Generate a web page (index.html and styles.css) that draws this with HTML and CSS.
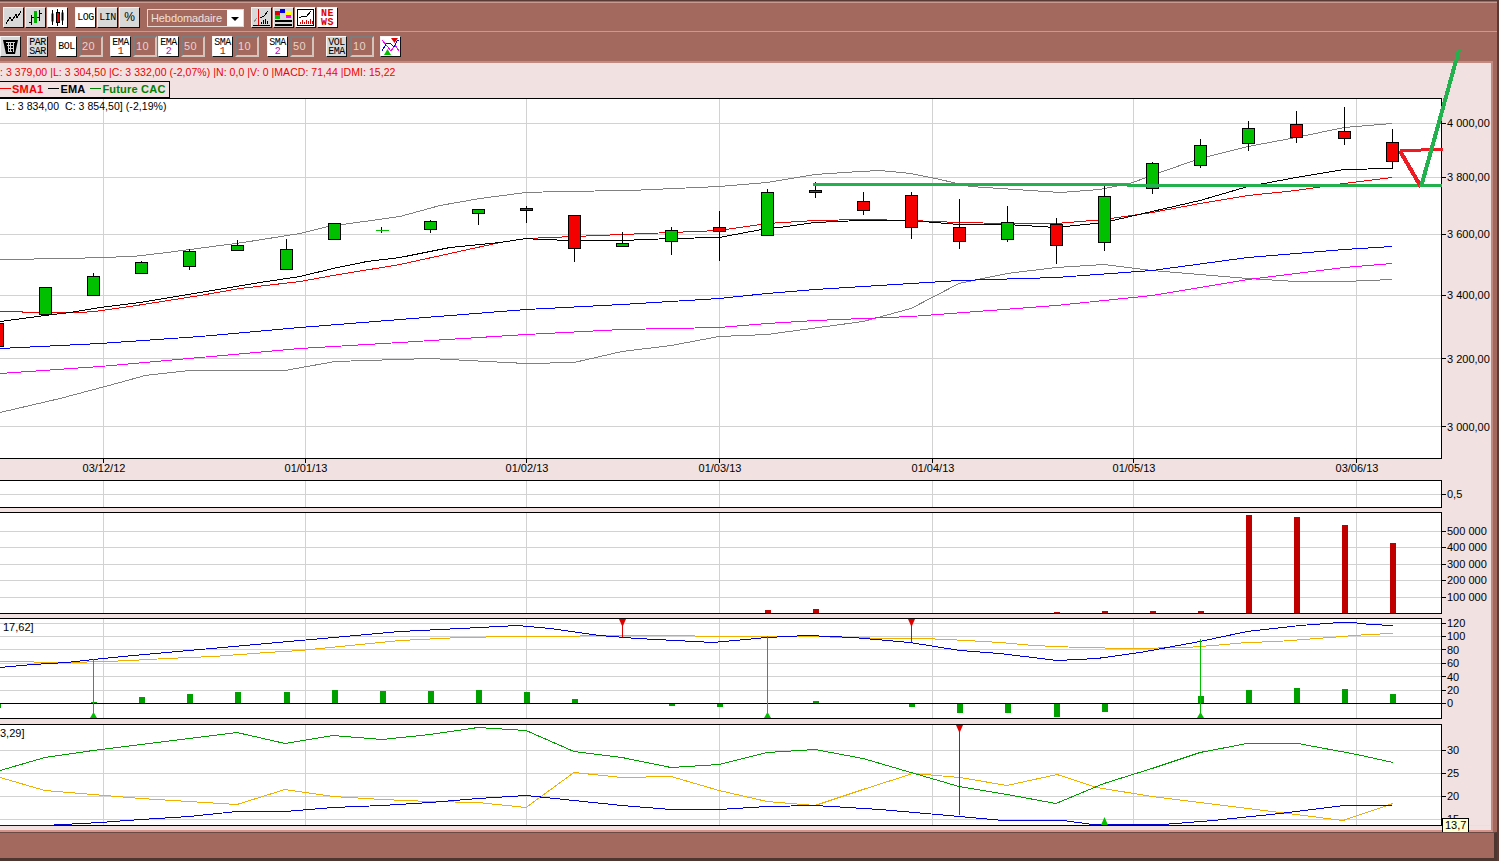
FILE: index.html
```html
<!DOCTYPE html>
<html>

<head>
    <title>Graphique - Hebdomadaire</title>
    <link rel="stylesheet" href="styles.css">
</head>

<body>
    <div class="toolbars">
        <div class="toolbar toolbar-top">
            <div class="group">
                <div class="btn">
                    <svg width="19" height="19" viewBox="0 0 19 19"><path class="ic" d="M2 16L6 9L8 13L12 6L13 10L17 3"/></svg>
                </div>
                <div class="btn">
                    <svg width="19" height="19" viewBox="0 0 19 19"><path class="ic" d="M5.500 7V17M3 14H5.500M5.500 9H8M13.500 2V13M11 9H13.500M13.500 5H16"/><path class="ic-green" d="M9.500 3V15"/></svg>
                </div>
                <div class="btn btn-white">
                    <svg width="19" height="19" viewBox="0 0 19 19"><path class="ic" d="M4.500 2V17M14.500 2V17"/><rect class="ic-candle" x="3.500" y="5.500" width="2" height="8"/><rect class="ic-candle" x="13.500" y="4.500" width="2" height="8"/><path class="ic" d="M9.500 1V18"/><rect class="ic-red" x="8" y="4" width="3" height="10"/></svg>
                </div>
            </div>
            <div class="group">
                <div class="btn btn-white">LOG</div>
                <div class="btn">LIN</div>
                <div class="btn btn-pct">%</div>
            </div>
            <div class="select">
                <span class="select-value">Hebdomadaire</span>
                <span class="select-arrow"></span>
            </div>
            <div class="group">
                <div class="btn">
                    <svg width="19" height="19" viewBox="0 0 19 19"><path class="ic-gray" d="M2 14L5 10"/><path class="ic-redline" d="M6.500 1V18"/><path class="ic" d="M8 10L12 8L16 3M9 16V14M11 16V12M13 16V11M15 16V13M1 17.500H18"/></svg>
                </div>
                <div class="btn">
                    <svg width="19" height="19" viewBox="0 0 19 19"><rect x="1" y="3" width="5" height="4" fill="#e00000"/><rect x="6" y="1" width="5" height="4" fill="#0000e0"/><rect x="12" y="3" width="5" height="4" fill="#ffff00"/><rect x="1" y="7" width="5" height="4" fill="#00c000"/><rect x="12" y="7" width="5" height="3" fill="#ff00ff"/><path class="ic-thick" d="M1 12.500H18M1 16.500H18"/></svg>
                </div>
                <div class="btn btn-white">
                    <svg width="19" height="19" viewBox="0 0 19 19"><rect class="ic" x="1.500" y="1.500" width="16" height="16"/><path class="ic" d="M3 10L7 8L10 9L15 3"/><path class="ic-redline" d="M4 16V14M6 16V12M8 16V14M10 16V12M12 16V13M14 16V11M16 16V13"/></svg>
                </div>
                <div class="btn btn-white btn-two btn-news">NE<br>WS</div>
            </div>
        </div>
        <div class="toolbar toolbar-bottom">
            <div class="group group-tools">
                <div class="btn">
                    <svg width="19" height="19" viewBox="0 0 19 19"><path class="ic-fill" d="M2 3H17L14 17H5Z"/><path class="ic-white" d="M5 5.500H14M6 8.500H13M7 11.500H12M8 14.500H11M7 5V15M9.500 5V15M12 5V15"/></svg>
                </div>
                <div class="btn btn-two">PAR<br>SAR</div>
            </div>
            <div class="pair">
                <div class="btn btn-white">BOL</div>
                <div class="input">20</div>
            </div>
            <div class="group group-ema">
                <div class="pair pair-tight">
                    <div class="btn btn-white btn-two">EMA<br><span class="num-red">1</span></div>
                    <div class="input">10</div>
                </div>
                <div class="pair">
                    <div class="btn btn-white btn-two">EMA<br><span class="num-magenta">2</span></div>
                    <div class="input">50</div>
                </div>
            </div>
            <div class="pair">
                <div class="btn btn-white btn-two">SMA<br><span class="num-red">1</span></div>
                <div class="input">10</div>
            </div>
            <div class="pair pair-sma2">
                <div class="btn btn-white btn-two">SMA<br><span class="num-magenta">2</span></div>
                <div class="input">50</div>
            </div>
            <div class="pair pair-vol">
                <div class="btn btn-two">VOL<br>EMA</div>
                <div class="input">10</div>
            </div>
            <div class="btn btn-white btn-signals">
                <svg width="19" height="19" viewBox="0 0 19 19"><path class="ic-magenta" d="M1 3L6 9L10 14L14 8L18 14"/><path class="ic-blue" d="M1 14L5 7L9 6L13 10L16 4L18 3"/><path class="ic-redfill" d="M10 1H17L13.500 6Z"/><path class="ic-greenfill" d="M3 18L6.500 12L10 18Z"/></svg>
            </div>
        </div>
    </div>

    <div class="workspace">
        <div class="info">: 3 379,00 |L: 3 304,50 |C: 3 332,00 (-2,07%) |N: 0,0 |V: 0 |MACD: 71,44 |DMI: 15,22</div>
        <div class="legend">
            <span class="legend-item legend-red">SMA1</span>
            <span class="legend-item legend-black">EMA</span>
            <span class="legend-item legend-green">Future CAC</span>
        </div>

        <svg class="chart" width="1491" height="733" viewBox="0 98 1491 733">
            <!-- panels -->
            <rect class="panel" x="-2" y="98.500" width="1443.500" height="360"/>
            <rect class="panel" x="-2" y="480.500" width="1443.500" height="27"/>
            <rect class="panel" x="-2" y="512.500" width="1443.500" height="101"/>
            <rect class="panel" x="-2" y="618.500" width="1443.500" height="100"/>
            <rect class="panel" x="-2" y="724.500" width="1443.500" height="101"/>

            <!-- grid -->
            <path class="grid" d="M103.500 99V458M305.500 99V458M526.500 99V458M719.500 99V458M932.500 99V458M1133.500 99V458M1356.500 99V458"/>
            <path class="grid" d="M0 123.500H1441M0 177.500H1441M0 234.500H1441M0 295.500H1441M0 358.500H1441M0 426.500H1441"/>
            <path class="grid" d="M103.500 481V507M305.500 481V507M526.500 481V507M719.500 481V507M932.500 481V507M1133.500 481V507M1356.500 481V507M0 494.500H1441"/>
            <path class="grid" d="M103.500 513V613M305.500 513V613M526.500 513V613M719.500 513V613M932.500 513V613M1133.500 513V613M1356.500 513V613M0 531.500H1441M0 547.500H1441M0 564.500H1441M0 580.500H1441M0 597.500H1441"/>
            <path class="grid" d="M103.500 619V718M305.500 619V718M526.500 619V718M719.500 619V718M932.500 619V718M1133.500 619V718M1356.500 619V718M0 623.500H1441M0 636.500H1441M0 649.500H1441M0 663.500H1441M0 676.500H1441M0 690.500H1441"/>
            <path class="grid" d="M103.500 725V825M305.500 725V825M526.500 725V825M719.500 725V825M932.500 725V825M1133.500 725V825M1356.500 725V825M0 750.500H1441M0 773.500H1441M0 796.500H1441M0 819.500H1441"/>
            <path class="grid-faint" d="M1469 825.500H1490"/>

            <!-- axis ticks -->
            <path class="tick" d="M1441 123.500H1446M1441 177.500H1446M1441 234.500H1446M1441 295.500H1446M1441 358.500H1446M1441 426.500H1446M1441 494.500H1446M1441 531.500H1446M1441 547.500H1446M1441 564.500H1446M1441 580.500H1446M1441 597.500H1446M1441 623.500H1446M1441 636.500H1446M1441 649.500H1446M1441 663.500H1446M1441 676.500H1446M1441 690.500H1446M1441 703.500H1446M1441 750.500H1446M1441 773.500H1446M1441 796.500H1446M1441 819.500H1446"/>
            <path class="tick" d="M103.500 458V463M305.500 458V463M526.500 458V463M719.500 458V463M932.500 458V463M1133.500 458V463M1356.500 458V463"/>

            <!-- main chart lines -->
            <polyline class="line line-gray" points="0,259 70,258 100,257 133,256 167,252 243,242 300,233 328,226 400,216 440,205 480,198 526,192 560,191 630,190 719,186 767,182 815,174 860,171 880,170 911,173 940,179 970,186 1000,188 1060,192 1100,189 1130,183 1160,172 1200,158 1248,146 1296,137 1344,127 1392,123"/>
            <polyline class="line line-gray" points="0,412 60,398 120,382 145,375 190,370 285,370 335,361 430,358 526,363 574,362 622,351 671,345 719,336 767,334 863,321 911,308 959,283 1007,273 1056,267 1104,264 1152,270 1248,278 1296,281 1344,281 1392,279"/>
            <polyline class="line line-blue" points="0,348 100,343 200,336 300,327 400,319 526,309 622,304 719,298 767,293 815,289 911,283 959,280 1056,277 1152,270 1248,257 1344,249 1392,246"/>
            <polyline class="line line-magenta" points="0,373 100,366 200,357 300,348 400,342 526,334 622,329 719,327 767,323 815,320 911,316 1056,305 1152,295 1248,279 1344,267 1392,263"/>
            <polyline class="line line-red" points="0,311 45,312 80,312 95,311 130,306 200,295 240,288 300,281 333,275 400,264 450,253 500,242 526,238 574,236 622,234 671,232 719,230 767,223 815,220 863,219 911,220 959,222 1007,223 1056,223 1104,219 1152,212 1200,203 1248,195 1296,190 1344,183 1392,177"/>
            <polyline class="line line-black" points="0,321 45,315 70,312 100,307 140,302 200,292 260,282 300,276 333,268 367,261 400,257 450,247 500,242 526,238 540,239 574,240 622,240 671,238 719,237 767,228 780,227 815,222 860,220 911,220 959,224 1007,224 1056,227 1104,222 1152,211 1200,200 1248,186 1296,177 1344,169 1392,168 1392,161"/>

            <!-- candles -->
            <path class="wick" d="M45.500 314V316M93.500 273V276M141.500 261V262M189.500 249V270M237.500 240V245M286.500 239V249M381.500 227V233M430.500 220V233M478.500 213V225M526.500 206V223M574.500 248V262M622.500 232V243M671.500 227V255M719.500 211V261M767.500 189V192M815.500 182V198M863.500 192V215M911.500 192V239M959.500 199V249M1007.500 206V242M1056.500 218V264M1104.500 186V251M1152.500 162V194M1200.500 139V168M1248.500 121V151M1296.500 111V143M1344.500 107V145M1392.500 129V161"/>
            <path class="cross" d="M376 230.500H389"/>
            <rect class="up" x="39.500" y="287.500" width="12" height="27"/>
            <rect class="up" x="87.500" y="276.500" width="12" height="19"/>
            <rect class="up" x="135.500" y="262.500" width="12" height="11"/>
            <rect class="up" x="183.500" y="251.500" width="12" height="15"/>
            <rect class="up" x="231.500" y="245.500" width="12" height="5"/>
            <rect class="up" x="280.500" y="249.500" width="12" height="20"/>
            <rect class="up" x="328.500" y="223.500" width="12" height="16"/>
            <rect class="up" x="424.500" y="221.500" width="12" height="8"/>
            <rect class="up" x="472.500" y="209.500" width="12" height="4"/>
            <rect class="down" x="520.500" y="208.500" width="12" height="2"/>
            <rect class="down" x="568.500" y="215.500" width="12" height="33"/>
            <rect class="up" x="616.500" y="243.500" width="12" height="3"/>
            <rect class="up" x="665.500" y="230.500" width="12" height="11"/>
            <rect class="down" x="713.500" y="227.500" width="12" height="4"/>
            <rect class="up" x="761.500" y="192.500" width="12" height="43"/>
            <rect class="down" x="809.500" y="190.500" width="12" height="2"/>
            <rect class="down" x="857.500" y="201.500" width="12" height="9"/>
            <rect class="down" x="905.500" y="195.500" width="12" height="32"/>
            <rect class="down" x="953.500" y="227.500" width="12" height="14"/>
            <rect class="up" x="1001.500" y="222.500" width="12" height="17"/>
            <rect class="down" x="1050.500" y="224.500" width="12" height="21"/>
            <rect class="up" x="1098.500" y="196.500" width="12" height="46"/>
            <rect class="up" x="1146.500" y="163.500" width="12" height="25"/>
            <rect class="up" x="1194.500" y="145.500" width="12" height="20"/>
            <rect class="up" x="1242.500" y="128.500" width="12" height="15"/>
            <rect class="down" x="1290.500" y="124.500" width="12" height="13"/>
            <rect class="down" x="1338.500" y="131.500" width="12" height="7"/>
            <rect class="down" x="1386.500" y="142.500" width="12" height="19"/>
            <rect class="down" x="-8.500" y="323.500" width="12" height="23"/>

            <!-- volume -->
            <rect class="vol" x="1246" y="515" width="6" height="98"/>
            <rect class="vol" x="1294" y="517" width="6" height="96"/>
            <rect class="vol" x="1342" y="525" width="6" height="88"/>
            <rect class="vol" x="1390" y="543" width="6" height="70"/>
            <rect class="vol" x="765" y="610" width="6" height="3"/>
            <rect class="vol" x="813" y="609" width="6" height="4"/>
            <rect class="vol" x="1054" y="612" width="6" height="1"/>
            <rect class="vol" x="1102" y="611" width="6" height="2"/>
            <rect class="vol" x="1150" y="611" width="6" height="2"/>
            <rect class="vol" x="1198" y="611" width="6" height="2"/>

            <!-- macd -->
            <path class="hist" d="M91 702h6v2h-6zM139 697h6v7h-6zM187 694h6v10h-6zM235 692h6v12h-6zM284 692h6v12h-6zM332 690h6v14h-6zM380 691h6v13h-6zM428 691h6v13h-6zM476 690h6v14h-6zM524 692h6v12h-6zM572 699h6v5h-6zM669 704h6v2h-6zM717 704h6v3h-6zM813 701h6v3h-6zM909 704h6v3h-6zM957 704h6v9h-6zM1005 704h6v9h-6zM1054 704h6v13h-6zM1102 704h6v8h-6zM1198 696h6v8h-6zM1246 690h6v14h-6zM1294 688h6v16h-6zM1342 689h6v15h-6zM1390 694h6v10h-6zM0 704h1v4h-1z"/>
            <path class="zero" d="M0 703.500H1441"/>
            <polyline class="line line-orange" points="0,661 67,662 107,661 130,660 167,658 213,656 267,652 300,650 400,640 460,637 513,636 550,636 610,635 693,635 697,636 807,636 853,637 887,638 923,638 947,639 967,640 1000,642 1033,645 1080,647 1130,648 1187,647 1213,645 1247,642 1277,641 1317,638 1367,634 1393,633"/>
            <polyline class="line line-dark-blue" points="0,667 33,664 67,662 93,659 133,655 167,652 200,649 267,643 300,640 400,631 480,627 517,625 550,628 600,635 637,638 713,642 767,637 807,635 853,637 910,642 960,650 1000,653 1057,660 1097,658 1140,652 1200,641 1247,631 1300,625 1340,622 1353,622 1370,624 1393,625"/>
            <path class="sig-green" d="M93.500 659V717M767.500 636V717M1200.500 639V717"/>
            <path class="tri-green" d="M93.500 712L97 718H90ZM767.500 712L771 718H764ZM1200.500 712L1204 718H1197Z"/>
            <path class="sig-red" d="M622.500 621V637M911.500 621V642"/>
            <path class="tri-red" d="M622.500 627L619 619H626ZM911.500 627L908 619H915Z"/>

            <!-- dmi -->
            <polyline class="line line-orange" points="0,777 45,790 93,794 141,798 189,801 237,804 285,789 333,796 382,799 430,801 478,802 526,807 574,772 622,777 671,776 719,790 767,801 815,805 863,789 913,773 960,777 1007,785 1057,774 1097,787 1152,796 1200,802 1248,808 1296,814 1343,820 1393,803"/>
            <polyline class="line line-green" points="0,770 45,757 93,750 141,744 189,738 237,732 285,743 333,735 382,739 430,734 478,727 526,730 574,751 622,757 671,767 719,764 767,752 815,749 863,758 911,772 959,786 1007,794 1056,803 1104,783 1152,768 1200,752 1247,743 1298,743 1357,754 1393,762"/>
            <polyline class="line line-dark-blue" points="0,825 45,825 100,822 141,819 189,816 237,811 285,811 333,807 382,805 430,802 478,798 526,795 574,800 622,805 671,809 719,809 767,806 815,805 880,809 960,816 1003,820 1063,820 1093,824 1163,824 1213,820 1280,813 1344,805 1392,805"/>
            <path class="sig-red" d="M959.500 727V815"/>
            <path class="tri-red" d="M959.500 733L956 725H963Z"/>
            <path class="tri-green" d="M1104.500 817L1108 825H1101Z"/>

            <!-- labels -->
            <text class="label label-small" x="6" y="110">L: 3 834,00  C: 3 854,50] (-2,19%)</text>
            <text class="label" x="3" y="631">17,62]</text>
            <text class="label" x="0" y="737">3,29]</text>

            <text class="label" x="1447" y="127">4 000,00</text>
            <text class="label" x="1447" y="181">3 800,00</text>
            <text class="label" x="1447" y="238">3 600,00</text>
            <text class="label" x="1447" y="299">3 400,00</text>
            <text class="label" x="1447" y="363">3 200,00</text>
            <text class="label" x="1447" y="431">3 000,00</text>
            <text class="label" x="1447" y="498">0,5</text>
            <text class="label" x="1447" y="535">500 000</text>
            <text class="label" x="1447" y="551">400 000</text>
            <text class="label" x="1447" y="568">300 000</text>
            <text class="label" x="1447" y="584">200 000</text>
            <text class="label" x="1447" y="601">100 000</text>
            <text class="label" x="1447" y="627">120</text>
            <text class="label" x="1447" y="640">100</text>
            <text class="label" x="1447" y="654">80</text>
            <text class="label" x="1447" y="667">60</text>
            <text class="label" x="1447" y="681">40</text>
            <text class="label" x="1447" y="694">20</text>
            <text class="label" x="1447" y="707">0</text>
            <text class="label" x="1447" y="754">30</text>
            <text class="label" x="1447" y="777">25</text>
            <text class="label" x="1447" y="800">20</text>
            <text class="label" x="1447" y="823">15</text>

            <text class="label label-mid" x="104" y="472">03/12/12</text>
            <text class="label label-mid" x="306" y="472">01/01/13</text>
            <text class="label label-mid" x="527" y="472">01/02/13</text>
            <text class="label label-mid" x="720" y="472">01/03/13</text>
            <text class="label label-mid" x="933" y="472">01/04/13</text>
            <text class="label label-mid" x="1134" y="472">01/05/13</text>
            <text class="label label-mid" x="1357" y="472">03/06/13</text>

            <rect class="tip" x="1442.500" y="818.500" width="26" height="15"/>
            <text class="label" x="1445" y="829">13,7</text>

            <!-- drawn trend lines -->
            <path class="trend-green" d="M813 184H1128M1127 185H1442"/>
            <path class="trend-red" d="M1400 150H1421L1443 149"/>
            <path class="trend-red trend-diag" d="M1400 151L1421 187"/>
            <path class="trend-green trend-diag" d="M1421 187L1459 50"/>
        </svg>
    </div>

    <div class="statusbar"></div>
</body>

</html>
```

FILE: styles.css
```css
body {
    margin: 0;
    height: 861px;
    box-sizing: border-box;
    overflow: hidden;
    display: flex;
    flex-direction: column;
    font-family: "Liberation Sans", Arial, sans-serif;
    font-size: 11px;
    background-color: #a3695f;
    border-right: 2px solid #5a3a34;
}

/* toolbars */
.toolbars {
    height: 61px;
    border-top: 1px solid #5a3a34;
    box-sizing: border-box;
    flex: none;
}

.toolbar {
    display: flex;
    align-items: flex-start;
}

.toolbar-top {
    height: 30px;
    margin-top: 1px;
    padding: 4px 0 0 3px;
    gap: 7px;
    box-sizing: border-box;
    border-top: 1px solid #c99a90;
    border-bottom: 1px solid #c99a90;
}

.toolbar-bottom {
    padding-top: 4px;
    gap: 7px;
}

.group {
    display: flex;
    gap: 1px;
}

.group-tools {
    gap: 6px;
    margin-right: 1px;
}

.group-ema {
    gap: 1px;
}

.pair {
    display: flex;
    gap: 2px;
}

.pair-sma2 {
    margin-left: 1px;
}

.pair-vol {
    margin-left: 5px;
    gap: 3px;
}

.btn-signals {
    margin-left: -1px;
}

.btn {
    width: 21px;
    height: 21px;
    box-sizing: border-box;
    display: flex;
    align-items: center;
    justify-content: center;
    text-align: center;
    background-color: #d8d8d8;
    border: 1px solid;
    border-color: #f4f4f4 #111 #111 #f4f4f4;
    font-family: "Liberation Mono", monospace;
    font-size: 10px;
    letter-spacing: -0.5px;
    line-height: 9px;
    color: #000;
}

.btn-two {
    display: block;
    padding-top: 1px;
}

.btn-white {
    background-color: #fff;
}

.btn-pct {
    font-family: "Liberation Sans", sans-serif;
    font-size: 12px;
    letter-spacing: 0;
}

.btn-news {
    color: #e00000;
    font-weight: bold;
    letter-spacing: 0.5px;
}

.num-red {
    color: #d00000;
}

.num-magenta {
    color: #c000c0;
}

.input {
    width: 24px;
    height: 21px;
    box-sizing: border-box;
    padding-left: 1px;
    line-height: 17px;
    font-size: 11px;
    letter-spacing: 0.3px;
    color: #e8d4cc;
    background-color: #a3695f;
    border: 2px solid;
    border-color: #7c7c7c #d4c4bc #d4c4bc #7c7c7c;
}

.select {
    width: 97px;
    height: 18px;
    margin-top: 2px;
    box-sizing: border-box;
    display: flex;
    background-color: #fff;
    border: 1px solid #e6d6d0;
}

.select-value {
    width: 79px;
    padding-left: 3px;
    box-sizing: border-box;
    line-height: 16px;
    letter-spacing: -0.1px;
    color: #f0e0d8;
    background-color: #a3695f;
    white-space: nowrap;
}

.select-arrow {
    width: 0;
    height: 0;
    margin: 7px 0 0 4px;
    border-left: 4px solid transparent;
    border-right: 4px solid transparent;
    border-top: 4px solid #000;
}

/* toolbar icons */
.ic,
.ic-gray,
.ic-green,
.ic-redline,
.ic-thick,
.ic-white,
.ic-magenta,
.ic-blue {
    fill: none;
    stroke-width: 1;
    shape-rendering: crispEdges;
}

.ic { stroke: #000; }
.ic-gray { stroke: #909090; }
.ic-green { stroke: #00b000; stroke-width: 3; }
.ic-redline { stroke: #e00000; }
.ic-thick { stroke: #000; stroke-width: 2; }
.ic-white { stroke: #d8d8d8; }
.ic-magenta { stroke: #ff00ff; }
.ic-blue { stroke: #0000e0; }
.ic-candle { fill: #000; }
.ic-red { fill: #e00000; stroke: #000; shape-rendering: crispEdges; }
.ic-fill { fill: #000; }
.ic-redfill { fill: #e00000; }
.ic-greenfill { fill: #00c000; }

/* workspace */
.workspace {
    flex: 1;
    min-height: 0;
    margin-right: 4px;
    padding-top: 1px;
    background-color: #f1e1e1;
    border-top: 2px solid #c08a80;
    border-right: 2px solid #c08a80;
    border-bottom: 2px solid #d8938a;
    box-sizing: border-box;
}

.info {
    height: 17px;
    line-height: 17px;
    font-size: 10.5px;
    color: #f00000;
    letter-spacing: 0.05px;
    white-space: pre;
}

.legend {
    width: 170px;
    height: 17px;
    padding-bottom: 2px;
    box-sizing: border-box;
    display: flex;
    align-items: center;
    gap: 5px;
    border: 1px solid #000;
    border-left: none;
    font-weight: bold;
    letter-spacing: 0.2px;
    white-space: nowrap;
}

.legend-item::before {
    content: "";
    display: inline-block;
    width: 11px;
    height: 1px;
    margin-right: 1px;
    vertical-align: 4px;
    background-color: currentColor;
}

.legend-red { color: #f00000; }
.legend-black { color: #000; }
.legend-green { color: #008000; }

.chart {
    display: block;
    overflow: visible;
}

.panel {
    fill: #fff;
    stroke: #000;
    shape-rendering: crispEdges;
}

.grid {
    fill: none;
    stroke: #d2d2d2;
    shape-rendering: crispEdges;
}

.grid-faint {
    stroke: #dce4e4;
    shape-rendering: crispEdges;
}

.tick,
.zero {
    fill: none;
    stroke: #000;
    shape-rendering: crispEdges;
}

.line {
    fill: none;
    stroke-width: 1;
    shape-rendering: crispEdges;
    transform: translateY(0.5px);
}

.line-gray { stroke: #808080; }
.line-blue { stroke: #0000ff; }
.line-dark-blue { stroke: #0000d8; }
.line-magenta { stroke: #ff00ff; }
.line-red { stroke: #f00000; }
.line-black { stroke: #000; }
.line-orange { stroke: #f0b000; }
.line-green { stroke: #009c00; }

.wick {
    fill: none;
    stroke: #000;
    shape-rendering: crispEdges;
}

.cross {
    stroke: #00c000;
    shape-rendering: crispEdges;
}

.up,
.down {
    stroke: #000;
    shape-rendering: crispEdges;
}

.up { fill: #00c000; }
.down { fill: #f40000; }

.vol {
    fill: #c00000;
    shape-rendering: crispEdges;
}

.hist {
    fill: #00a000;
    shape-rendering: crispEdges;
}

.sig-green {
    fill: none;
    stroke: #00c000;
    shape-rendering: crispEdges;
}

.sig-red {
    fill: none;
    stroke: #e00000;
    shape-rendering: crispEdges;
}

.tri-green { fill: #00c000; }
.tri-red { fill: #e00000; }

.label {
    font-family: "Liberation Sans", Arial, sans-serif;
    font-size: 11px;
    fill: #000;
    white-space: pre;
}

.label-small {
    font-size: 10.5px;
    letter-spacing: 0.05px;
}

.label-mid {
    text-anchor: middle;
}

.tip {
    fill: #ffffd0;
    stroke: #000;
    shape-rendering: crispEdges;
}

.trend-green,
.trend-red {
    fill: none;
    stroke-width: 3;
    shape-rendering: crispEdges;
}

.trend-green { stroke: #22b14c; }
.trend-red { stroke: #ed1c24; }

.trend-diag {
    stroke-width: 4;
}

/* bottom bar */
.statusbar {
    height: 29px;
    flex: none;
    box-sizing: border-box;
    background-color: #a3695f;
    border-top: 1px solid #6a4a44;
    border-bottom: 3px solid #4d3530;
    border-right: 3px solid #4d3530;
}
```
